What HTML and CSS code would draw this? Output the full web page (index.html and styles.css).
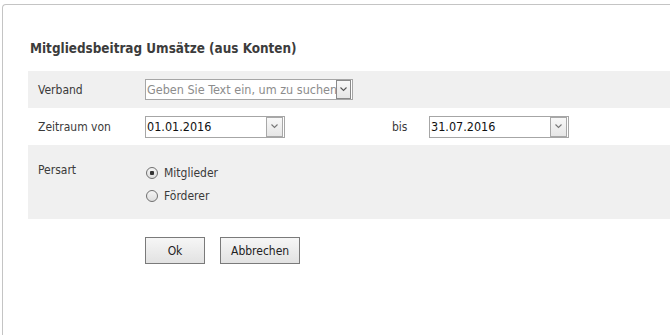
FILE: index.html
```html
<!DOCTYPE html>
<html lang="de">
<head>
    <meta charset="UTF-8">
    <title>Mitgliedsbeitrag Umsätze</title>
    <link rel="stylesheet" href="styles.css">
</head>
<body>
    <div class="panel">
        <h2 class="title">Mitgliedsbeitrag Umsätze (aus Konten)</h2>

        <div class="row shaded">
            <label class="label">Verband</label>
            <div class="combo combo-wide">
                <input type="text" placeholder="Geben Sie Text ein, um zu suchen">
                <span class="drop">
                    <svg width="7" height="5" viewBox="0 0 7 5"><path d="M0.5 0.5 L3.5 3.5 L6.5 0.5" fill="none" stroke="#555" stroke-width="1.1"/></svg>
                </span>
            </div>
        </div>

        <div class="row">
            <label class="label">Zeitraum von</label>
            <div class="combo combo-date">
                <input type="text" value="01.01.2016">
                <span class="drop drop-date">
                    <svg width="7" height="5" viewBox="0 0 7 5"><path d="M0.5 0.5 L3.5 3.5 L6.5 0.5" fill="none" stroke="#777" stroke-width="1.1"/></svg>
                </span>
            </div>
            <label class="label-bis">bis</label>
            <div class="combo combo-date">
                <input type="text" value="31.07.2016">
                <span class="drop drop-date">
                    <svg width="7" height="5" viewBox="0 0 7 5"><path d="M0.5 0.5 L3.5 3.5 L6.5 0.5" fill="none" stroke="#777" stroke-width="1.1"/></svg>
                </span>
            </div>
        </div>

        <div class="row shaded row-tall">
            <label class="label">Persart</label>
            <div class="radio-group">
                <label class="radio"><input type="radio" name="persart" checked> Mitglieder</label>
                <label class="radio"><input type="radio" name="persart"> Förderer</label>
            </div>
        </div>

        <div class="actions">
            <button class="btn btn-ok">Ok</button>
            <button class="btn">Abbrechen</button>
        </div>
    </div>
</body>
</html>
```

FILE: styles.css
```css
body {
    margin: 0;
    padding: 0;
    background: #fff;
    font-family: "DejaVu Sans Condensed", "DejaVu Sans", sans-serif;
    font-stretch: condensed;
    font-size: 12px;
    color: #3a3a3a;
}

.panel {
    margin: 4px 0 0 2px;
    height: 340px;
    border-top: 1px solid #c4c4c4;
    border-left: 1px solid #c4c4c4;
    border-top-left-radius: 4px;
    padding-left: 25px;
}

.title {
    margin: 0;
    padding: 36px 0 0 2px;
    height: 30px;
    font-size: 13.4px;
    font-weight: bold;
    color: #3c3c3c;
}

.row {
    display: flex;
    align-items: center;
    height: 37px;
    padding-left: 10px;
}

.shaded {
    background-color: #f0f0f0;
}

.row-tall {
    height: 74px;
    align-items: flex-start;
}

.label {
    width: 107px;
}

.row-tall .label {
    padding-top: 18px;
}

.label-bis {
    margin-left: 107px;
    width: 37px;
}

.combo {
    display: flex;
    align-items: center;
    box-sizing: border-box;
    border: 1px solid #a6a6a6;
    background: #fff;
    padding: 0 1px 0 0;
}

.combo input {
    flex: 1;
    min-width: 0;
    border: none;
    outline: none;
    padding: 0 0 0 1px;
    font-family: inherit;
    font-stretch: condensed;
    font-size: 12.5px;
    color: #111;
    background: transparent;
}

.combo input::placeholder {
    color: #8c8c8c;
}

.combo-wide {
    width: 208px;
    height: 21px;
}

.combo-date {
    width: 140px;
    height: 22px;
}

.drop {
    display: flex;
    align-items: center;
    justify-content: center;
    box-sizing: border-box;
    width: 15px;
    height: 19px;
    border: 1px solid #8a8a8a;
    background: linear-gradient(#f8f8f8, #e6e6e6);
}

.drop-date {
    width: 17px;
    height: 20px;
    border-color: #a8a8a8;
}

.radio-group {
    display: flex;
    flex-direction: column;
    gap: 6px;
    padding-top: 19px;
}

.radio {
    display: flex;
    align-items: center;
    height: 17px;
    margin-left: 1px;
}

.radio input {
    appearance: none;
    -webkit-appearance: none;
    width: 12px;
    height: 12px;
    margin: 0 6px 0 0;
    border: 1px solid #6f6f6f;
    border-radius: 50%;
    background: linear-gradient(#f4f4f4, #dedede);
}

.radio input:checked {
    background: radial-gradient(circle, #333 0, #333 2px, transparent 2.5px), linear-gradient(#f4f4f4, #dedede);
}

.actions {
    display: flex;
    gap: 15px;
    padding: 18px 0 0 117px;
}

.btn {
    height: 27px;
    padding: 0 10px;
    border: 1px solid #7a7a7a;
    background: linear-gradient(#f6f6f6, #e2e2e2);
    font-family: inherit;
    font-stretch: condensed;
    font-size: 12px;
    color: #222;
}

.btn-ok {
    width: 60px;
}
```
